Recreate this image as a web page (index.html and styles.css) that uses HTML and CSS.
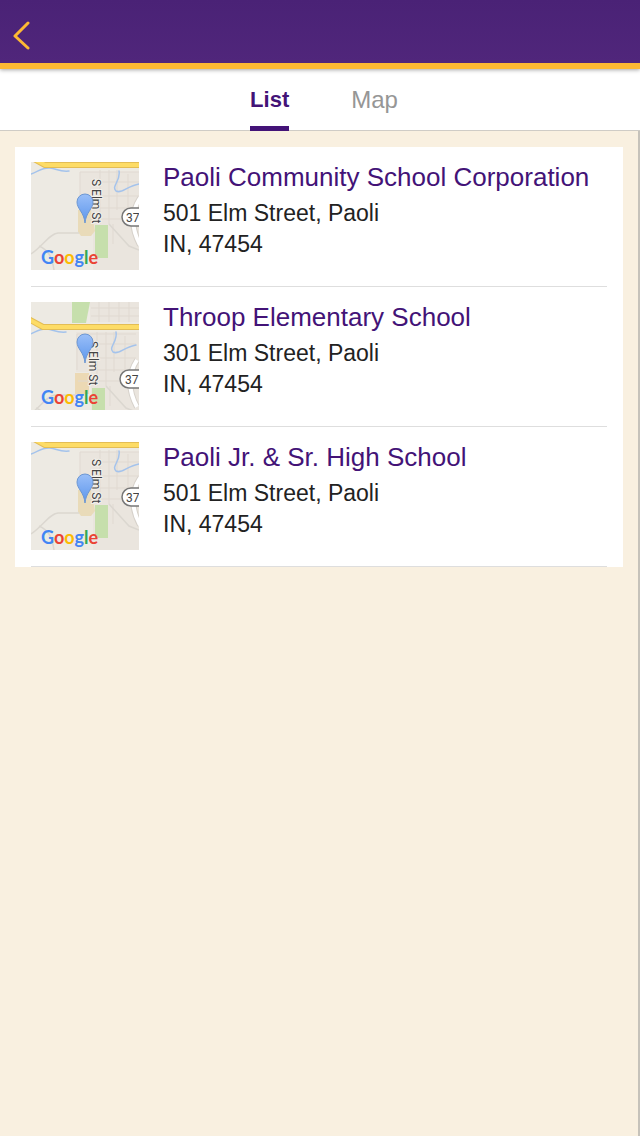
FILE: index.html
```
<!DOCTYPE html>
<html lang="en">
<head>
  <meta charset="UTF-8">
  <meta name="viewport" content="width=device-width, initial-scale=1.0">
  <title>Locations</title>
  <link rel="stylesheet" href="styles.css">
</head>
<body>
<!-- Shared map drawings -->
<svg class="defs" width="0" height="0" aria-hidden="true">
  <defs>
    <linearGradient id="pinFill" x1="0" y1="0" x2="0" y2="1">
      <stop offset="0" stop-color="#9abff8"/>
      <stop offset="1" stop-color="#5b95ec"/>
    </linearGradient>
    <g id="streets" fill="none">
      <path d="M49 10H108M64 20H108M64 34H108M64 46H108M50 57H108M69 8V62M78 8V62M86 8V48M97 12V58M82 62V82M49 10V46" stroke="#e0d9d1" stroke-width="1"/>
      <path d="M0 92C12 84 18 72 27 71H48M8 84C17 88 21 94 23 108M78 62L98 84L108 88" stroke="#dbd7d0" stroke-width="1.5"/>
      <path d="M109 36C100 50 100 66 109 83" stroke="#d6d1ca" stroke-width="6"/>
      <path d="M109 36C100 50 100 66 109 83" stroke="#fff" stroke-width="4"/>
    </g>
    <g id="river" fill="none" stroke="#a4c3ec" stroke-width="1.5" stroke-linecap="round">
      <path d="M0 12C8 9 12 5 19 6S29 10 38 9"/>
      <path d="M88 9C90 19 80 24 85 29C91 32 96 24 108 22"/>
    </g>
    <g id="highway" fill="none" stroke-linejoin="round">
      <path d="M-8 -9L14 3H112" stroke="#e3bd55" stroke-width="6"/>
      <path d="M-8 -9L14 3H112" stroke="#fddc66" stroke-width="4"/>
    </g>
    <g id="pin">
      <path d="M54 61C53 50 46 47 46 40A8 8 0 0 1 62 40C62 47 55 50 54 61Z" fill="url(#pinFill)" stroke="#6d97d2" stroke-width="1"/>
    </g>
  </defs>
</svg>

<header class="header">
  <button class="back" type="button" aria-label="Back">
    <svg width="18" height="30" viewBox="0 0 18 30" fill="none" stroke="#fdb933" stroke-width="3" stroke-linecap="round" stroke-linejoin="round"><path d="M16 3L3 16L16 28"/></svg>
  </button>
</header>

<nav class="tabs">
  <a class="tab active" href="#list">List</a>
  <a class="tab" href="#map">Map</a>
</nav>

<main class="content">
  <ul class="locations" id="list">
    <li class="location">
      <svg class="thumb" viewBox="0 0 108 108" role="img" aria-label="Map of 501 Elm Street">
        <rect width="108" height="108" fill="#edeae3"/>
        <path d="M49 10H108V108H62V62H49Z" fill="#eae5de"/>
        <path d="M47 48H60L64 69L60 74H50L47 70Z" fill="#e9dbb9"/>
        <path d="M64 63H77V96H64Z" fill="#c6dfac"/>
        <use href="#streets"/>
        <use href="#river"/>
        <use href="#highway"/>
        <rect x="91" y="46" width="30" height="18" rx="9" fill="#fff" stroke="#777" stroke-width="1.5"/>
        <text class="route" x="95" y="60">37</text>
        <text class="street" transform="translate(61 17) rotate(90)">S Elm St</text>
        <use href="#pin"/>
        <text class="google" x="10" y="102"><tspan class="blue">G</tspan><tspan class="red">o</tspan><tspan class="yellow">o</tspan><tspan class="blue">g</tspan><tspan class="green">l</tspan><tspan class="red">e</tspan></text>
      </svg>
      <div class="info">
        <h2 class="name">Paoli Community School Corporation</h2>
        <p class="address">501 Elm Street, Paoli<br>IN, 47454</p>
      </div>
    </li>
    <li class="location">
      <svg class="thumb" viewBox="0 0 108 108" role="img" aria-label="Map of 301 Elm Street">
        <rect width="108" height="108" fill="#edeae3"/>
        <path d="M41 0H59L55 21H41Z" fill="#c6dfac"/>
        <path d="M45 30H108V108H60V70H45Z" fill="#eae5de"/>
        <path d="M59 0H108V20H59Z" fill="#eae5de"/>
        <path d="M68 0V20M78 0V20M88 0V20M98 0V20M60 6H108M60 14H108" stroke="#e0d9d1" fill="none"/>
        <path d="M44 71H58V92H44Z" fill="#ecd9b4"/>
        <path d="M61 86H74V108H61Z" fill="#c6dfac"/>
        <use href="#streets" x="-3" y="22"/>
        <use href="#river" x="-3" y="21"/>
        <use href="#highway" x="-2" y="22"/>
        <rect x="89" y="68" width="30" height="18" rx="9" fill="#fff" stroke="#777" stroke-width="1.5"/>
        <text class="route" x="94" y="82">37</text>
        <text class="street" transform="translate(58 39) rotate(90)">S Elm St</text>
        <use href="#pin"/>
        <text class="google" x="10" y="102"><tspan class="blue">G</tspan><tspan class="red">o</tspan><tspan class="yellow">o</tspan><tspan class="blue">g</tspan><tspan class="green">l</tspan><tspan class="red">e</tspan></text>
      </svg>
      <div class="info">
        <h2 class="name">Throop Elementary School</h2>
        <p class="address">301 Elm Street, Paoli<br>IN, 47454</p>
      </div>
    </li>
    <li class="location">
      <svg class="thumb" viewBox="0 0 108 108" role="img" aria-label="Map of 501 Elm Street">
        <rect width="108" height="108" fill="#edeae3"/>
        <path d="M49 10H108V108H62V62H49Z" fill="#eae5de"/>
        <path d="M47 48H60L64 69L60 74H50L47 70Z" fill="#e9dbb9"/>
        <path d="M64 63H77V96H64Z" fill="#c6dfac"/>
        <use href="#streets"/>
        <use href="#river"/>
        <use href="#highway"/>
        <rect x="91" y="46" width="30" height="18" rx="9" fill="#fff" stroke="#777" stroke-width="1.5"/>
        <text class="route" x="95" y="60">37</text>
        <text class="street" transform="translate(61 17) rotate(90)">S Elm St</text>
        <use href="#pin"/>
        <text class="google" x="10" y="102"><tspan class="blue">G</tspan><tspan class="red">o</tspan><tspan class="yellow">o</tspan><tspan class="blue">g</tspan><tspan class="green">l</tspan><tspan class="red">e</tspan></text>
      </svg>
      <div class="info">
        <h2 class="name">Paoli Jr. &amp; Sr. High School</h2>
        <p class="address">501 Elm Street, Paoli<br>IN, 47454</p>
      </div>
    </li>
  </ul>
</main>
</body>
</html>
```
FILE: styles.css
```
* { box-sizing: border-box; }
body {
  margin: 0;
  min-height: 100vh;
  display: flex;
  flex-direction: column;
  background: #f9f0e0;
  font-family: "Liberation Sans", Arial, sans-serif;
  color: #222;
}
.defs { position: absolute; }

/* Header */
.header {
  position: relative;
  z-index: 1;
  display: flex;
  background: linear-gradient(#4a2276, #50267b);
  border-bottom: 6px solid #fdb933;
  box-shadow: 0 1px 4px rgba(0,0,0,0.35);
}
.back {
  padding: 20px 12px 13px;
  border: none;
  background: none;
  cursor: pointer;
}
.back svg { display: block; }

/* Tabs */
.tabs {
  display: flex;
  justify-content: center;
  gap: 62px;
  padding-left: 8px;
  background: #fff;
  border-bottom: 1px solid #cfccc6;
}
.tab {
  height: 62px;
  margin-bottom: -1px;
  line-height: 62px;
  font-size: 24px;
  color: #969696;
  text-decoration: none;
}
.tab.active {
  font-size: 22px;
  font-weight: 700;
  color: #431377;
  border-bottom: 5px solid #431377;
}

/* List */
.content {
  flex: 1;
  padding: 16px 15px;
  border-right: 2px solid #c6c2ba;
}
.locations {
  margin: 0;
  padding: 0 16px;
  background: #fff;
  list-style: none;
}
.location {
  display: flex;
  gap: 24px;
  padding: 15px 0 16px;
  border-bottom: 1px solid #dedede;
}
.thumb {
  flex: none;
  width: 108px;
  height: 108px;
}
.info { min-width: 0; }
.name {
  margin: 0 0 6px;
  font-size: 26px;
  font-weight: 400;
  line-height: 30px;
  color: #431377;
}
.address {
  margin: 0;
  font-size: 23px;
  line-height: 31px;
}

/* Map labels */
.route {
  font-family: Roboto, sans-serif;
  font-size: 12px;
  fill: #444;
}
.street {
  font-family: Roboto, sans-serif;
  font-size: 12px;
  fill: #444;
  stroke: #f3f0ea;
  stroke-width: 2px;
  paint-order: stroke;
}
.google {
  font-family: Lato, "Liberation Sans", sans-serif;
  font-size: 18px;
  font-weight: 700;
}
.blue { fill: #4285f4; }
.red { fill: #ea4335; }
.yellow { fill: #fbbc05; }
.green { fill: #34a853; }
```
